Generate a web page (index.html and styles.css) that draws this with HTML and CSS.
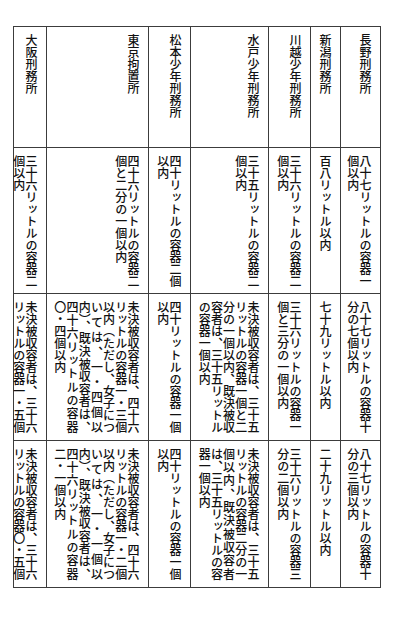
FILE: index.html
```html
<!DOCTYPE html>
<html lang="ja">
<head>
<meta charset="utf-8">
<title>容器表</title>
<link rel="stylesheet" href="styles.css">
</head>
<body>
<div class="table">
  <!-- 長野刑務所 -->
  <div class="cell head"><div class="txt"><p class="ln">長野刑務所</p></div></div>
  <div class="cell"><div class="txt"><p class="ln j">八十七リットルの容器一</p><p class="ln">個以内</p></div></div>
  <div class="cell"><div class="txt"><p class="ln j">八十七リットルの容器十</p><p class="ln">分の七個以内</p></div></div>
  <div class="cell"><div class="txt"><p class="ln j">八十七リットルの容器十</p><p class="ln">分の三個以内</p></div></div>

  <!-- 新潟刑務所 -->
  <div class="cell head"><div class="txt"><p class="ln">新潟刑務所</p></div></div>
  <div class="cell"><div class="txt"><p class="ln">百八リットル以内</p></div></div>
  <div class="cell"><div class="txt"><p class="ln">七十九リットル以内</p></div></div>
  <div class="cell"><div class="txt"><p class="ln">二十九リットル以内</p></div></div>

  <!-- 川越少年刑務所 -->
  <div class="cell head"><div class="txt"><p class="ln">川越少年刑務所</p></div></div>
  <div class="cell"><div class="txt"><p class="ln j">三十六リットルの容器二</p><p class="ln">個以内</p></div></div>
  <div class="cell"><div class="txt"><p class="ln j">三十六リットルの容器一</p><p class="ln">個と三分の一個以内</p></div></div>
  <div class="cell"><div class="txt"><p class="ln j">三十六リットルの容器三</p><p class="ln">分の二個以内</p></div></div>

  <!-- 水戸少年刑務所 -->
  <div class="cell head"><div class="txt"><p class="ln">水戸少年刑務所</p></div></div>
  <div class="cell"><div class="txt"><p class="ln j">三十五リットルの容器二</p><p class="ln">個以内</p></div></div>
  <div class="cell"><div class="txt"><p class="ln j">未決被収容者は、三十五</p><p class="ln j">リットルの容器一個と二</p><p class="ln j">分の一個以内、既決被収</p><p class="ln j">容者は、三十五リットル</p><p class="ln">の容器一個以内</p></div></div>
  <div class="cell"><div class="txt"><p class="ln j">未決被収容者は、三十五</p><p class="ln j">リットルの容器二分の一</p><p class="ln j">個以内、既決被収容者</p><p class="ln j">は、三十五リットルの容</p><p class="ln">器一個以内</p></div></div>

  <!-- 松本少年刑務所 -->
  <div class="cell head"><div class="txt"><p class="ln">松本少年刑務所</p></div></div>
  <div class="cell"><div class="txt"><p class="ln j">四十リットルの容器二個</p><p class="ln">以内</p></div></div>
  <div class="cell"><div class="txt"><p class="ln j">四十リットルの容器一個</p><p class="ln">以内</p></div></div>
  <div class="cell"><div class="txt"><p class="ln j">四十リットルの容器一個</p><p class="ln">以内</p></div></div>

  <!-- 東京拘置所 -->
  <div class="cell head"><div class="txt"><p class="ln">東京拘置所</p></div></div>
  <div class="cell"><div class="txt"><p class="ln j">四十六リットルの容器二</p><p class="ln">個と二分の一個以内</p></div></div>
  <div class="cell"><div class="txt"><p class="ln j">未決被収容者は、四十六</p><p class="ln j">リットルの容器一・三個</p><p class="ln j">以内（ただし、女子につ</p><p class="ln j">いては、一・四個以</p><p class="ln j">内）、既決被収容者は、</p><p class="ln j">四十六リットルの容器</p><p class="ln">〇・四個以内</p></div></div>
  <div class="cell"><div class="txt"><p class="ln j">未決被収容者は、四十六</p><p class="ln j">リットルの容器一・二個</p><p class="ln j">以内（ただし、女子につ</p><p class="ln j">いては、一・一個以</p><p class="ln j">内）、既決被収容者は、</p><p class="ln j">四十六リットルの容器</p><p class="ln">二・一個以内</p></div></div>

  <!-- 大阪刑務所 -->
  <div class="cell head"><div class="txt"><p class="ln">大阪刑務所</p></div></div>
  <div class="cell"><div class="txt"><p class="ln j">三十六リットルの容器二</p><p class="ln">個以内</p></div></div>
  <div class="cell"><div class="txt"><p class="ln j">未決被収容者は、三十六</p><p class="ln">リットルの容器一・五個</p></div></div>
  <div class="cell"><div class="txt"><p class="ln j">未決被収容者は、三十六</p><p class="ln">リットルの容器〇・五個</p></div></div>
</div>
</body>
</html>
```

FILE: styles.css
```css
html, body {
  margin: 0;
  padding: 0;
  background: #ffffff;
}

body {
  padding: 26px 0 0 13px;
  font-family: "Noto Sans CJK JP", "Noto Sans CJK SC", sans-serif;
  font-size: 12px;
  font-weight: 500;
  color: #111111;
}

.table {
  display: grid;
  direction: rtl;
  grid-auto-flow: column;
  grid-template-columns: 40px 30px 42px 78px 42px 102px 33px;
  grid-template-rows: 121px 146px 147px 147px;
  width: max-content;
  border-left: 1px solid #3c3c3c;
  border-bottom: 1px solid #3c3c3c;
}

.cell {
  direction: ltr;
  box-sizing: border-box;
  display: flex;
  justify-content: flex-end;
  align-items: flex-start;
  padding: 7px 9px 0 0;
  border-top: 1px solid #3c3c3c;
  border-right: 1px solid #3c3c3c;
}

.txt {
  writing-mode: vertical-rl;
  flex: none;
}

.ln {
  margin: 0;
  line-height: 12.2px;
  white-space: nowrap;
  inline-size: 132px;
}

.head .ln {
  inline-size: auto;
}

.j {
  text-align: justify;
  text-align-last: justify;
}
```
